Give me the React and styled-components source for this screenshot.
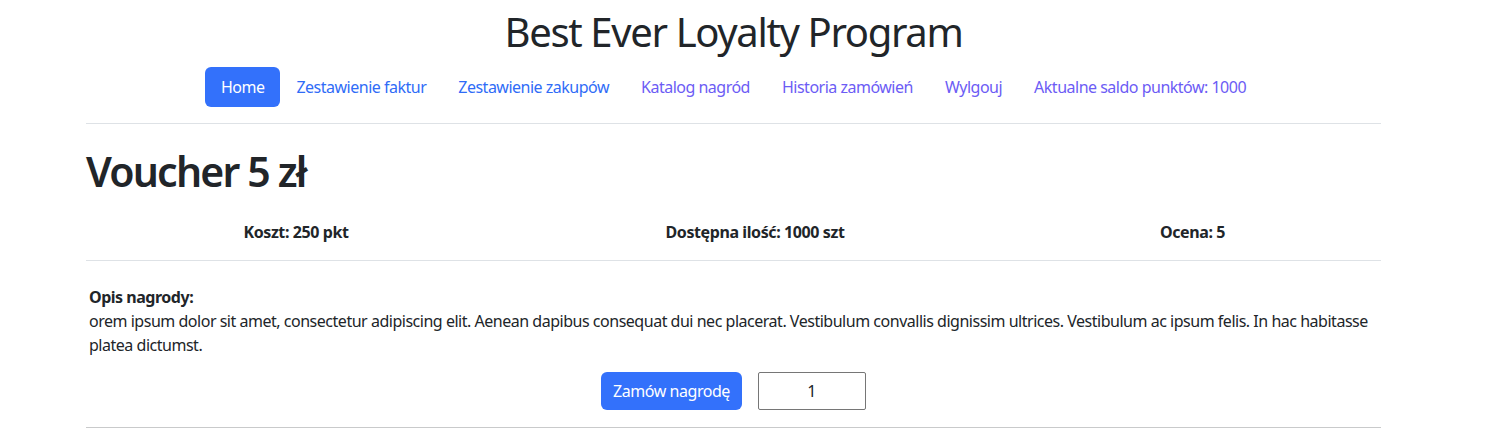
import React, { useState } from "react";
import styled, { createGlobalStyle } from "styled-components";

const navItems = [
  { id: "home", label: "Home", active: true },
  { id: "invoices", label: "Zestawienie faktur" },
  { id: "purchases", label: "Zestawienie zakupów" },
  { id: "catalog", label: "Katalog nagród", visited: true },
  { id: "orders", label: "Historia zamówień", visited: true },
  { id: "logout", label: "Wylgouj", visited: true },
  { id: "balance", label: "Aktualne saldo punktów: 1000", visited: true },
];

const App = () => {
  const [amount, setAmount] = useState(1);

  return (
    <>
      <GlobalStyle />
      <Page>
        <Header>
          <Title>Best Ever Loyalty Program</Title>
          <Nav>
            {navItems.map((item) => (
              <NavLink
                key={item.id}
                href="#"
                $active={item.active}
                $visited={item.visited}
              >
                {item.label}
              </NavLink>
            ))}
          </Nav>
        </Header>

        <RewardName>Voucher 5 zł</RewardName>
        <InfoRow>
          <InfoCell>Koszt: 250 pkt</InfoCell>
          <InfoCell>Dostępna ilość: 1000 szt</InfoCell>
          <InfoCell>Ocena: 5</InfoCell>
        </InfoRow>

        <Description>
          <DescLabel>Opis nagrody:</DescLabel>
          <DescText>
            orem ipsum dolor sit amet, consectetur adipiscing elit. Aenean
            dapibus consequat dui nec placerat. Vestibulum convallis dignissim
            ultrices. Vestibulum ac ipsum felis. In hac habitasse platea
            dictumst.
          </DescText>
        </Description>

        <OrderBar>
          <OrderButton type="button">Zamów nagrodę</OrderButton>
          <AmountInput
            type="number"
            value={amount}
            min={1}
            onChange={(e) => setAmount(e.target.value)}
          />
        </OrderBar>
      </Page>
    </>
  );
};

const GlobalStyle = createGlobalStyle`
  body {
    margin: 0;
    background: #fff;
    color: #212529;
    font-family: "Noto Sans", "Open Sans", sans-serif;
    font-size: 16px;
    line-height: 1.5;
  }
`;

const Page = styled.div`
  width: 1295px;
  margin-left: 86px;
  padding-bottom: 13px;
`;

const Header = styled.header`
  display: flex;
  flex-direction: column;
  align-items: center;
  padding-top: 8px;
  padding-bottom: 16px;
  border-bottom: 1px solid #dee2e6;
`;

const Title = styled.h1`
  margin: 0 0 11px;
  font-size: 40px;
  font-weight: 400;
  line-height: 48px;
  letter-spacing: -1.35px;
`;

const Nav = styled.nav`
  display: flex;
`;

const NavLink = styled.a`
  display: block;
  padding: 8px 16px;
  border-radius: 6px;
  text-decoration: none;
  font-size: 16px;
  line-height: 24px;
  letter-spacing: -0.5px;
  color: ${(p) => (p.$active ? "#fff" : p.$visited ? "#6c5cf5" : "#2f6cf7")};
  background: ${(p) => (p.$active ? "#3371fb" : "transparent")};
`;

const RewardName = styled.h1`
  margin: 22px 0 0;
  font-size: 41px;
  font-weight: 600;
  line-height: 50px;
  letter-spacing: -1.8px;
`;

const InfoRow = styled.div`
  display: grid;
  grid-template-columns: 420px 498px 1fr;
  margin-top: 15px;
  border-bottom: 1px solid #dee2e6;
`;

const InfoCell = styled.div`
  padding: 9px 8px 16px;
  text-align: center;
  font-size: 16px;
  font-weight: 700;
  line-height: 24px;
  letter-spacing: -0.4px;
`;

const Description = styled.div`
  padding: 24px 3px 0;
  font-size: 16px;
  letter-spacing: -0.48px;
`;

const DescLabel = styled.div`
  font-weight: 700;
  line-height: 24px;
`;

const DescText = styled.p`
  margin: 0;
  line-height: 24px;
`;

const OrderBar = styled.div`
  display: flex;
  justify-content: center;
  gap: 16px;
  margin-top: 15px;
  padding-bottom: 17px;
  border-bottom: 1px solid #c9cacb;
`;

const OrderButton = styled.button`
  height: 38px;
  padding: 6px 12px;
  border: none;
  border-radius: 6px;
  background: #3371fb;
  color: #fff;
  font-family: inherit;
  font-size: 16px;
  line-height: 24px;
  letter-spacing: -0.45px;
`;

const AmountInput = styled.input`
  box-sizing: border-box;
  width: 108px;
  height: 38px;
  border: 1px solid #767676;
  border-radius: 2px;
  text-align: center;
  font-family: inherit;
  font-size: 16px;
  color: #212529;
  -moz-appearance: textfield;
  &::-webkit-outer-spin-button,
  &::-webkit-inner-spin-button {
    -webkit-appearance: none;
    margin: 0;
  }
`;

export default App;
